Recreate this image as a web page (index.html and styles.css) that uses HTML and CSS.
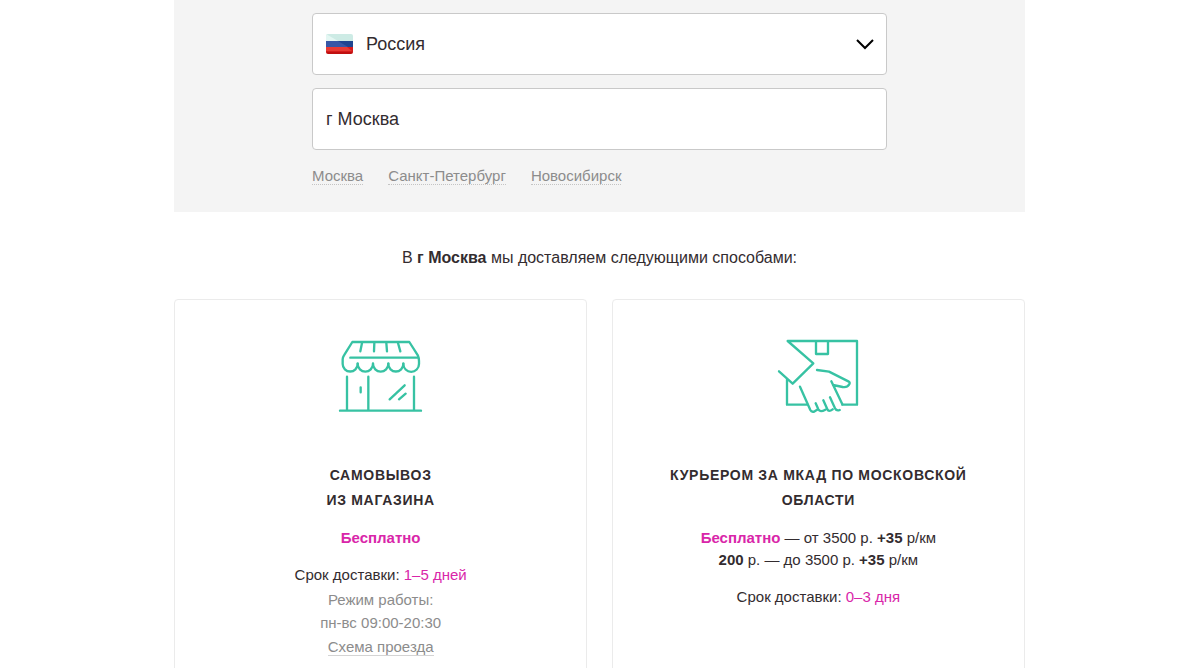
FILE: index.html
```html
<!DOCTYPE html>
<html lang="ru">
<head>
  <meta charset="UTF-8" />
  <meta name="viewport" content="width=device-width, initial-scale=1.0" />
  <title>Доставка</title>
  <link rel="stylesheet" href="styles.css">
</head>
<body>

  <main class="delivery">
    <section class="region">
      <form class="region-form">
        <div class="country">
          <svg class="flag" viewBox="0 0 27 20" aria-hidden="true">
            <clipPath id="flag-shape"><rect width="27" height="20" rx="2" /></clipPath>
            <g clip-path="url(#flag-shape)">
              <path fill="#cdebe5" d="M0 0h27v7H0z" />
              <path fill="#e4f7f3" d="M0 0l12 7H0z" />
              <path fill="#1f4590" d="M0 7h27v6H0z" />
              <path fill="#3757a6" d="M0 7h12l10 6H0z" />
              <path fill="#d51c1c" d="M0 13h27v5H0z" />
              <path fill="#e83a33" d="M0 13h21l5 4H0z" />
              <path fill="#c01010" d="M0 18h27v2H0z" />
            </g>
          </svg>
          <select class="field country-select" aria-label="Страна">
            <option>Россия</option>
          </select>
          <svg class="arrow" viewBox="0 0 18 11" aria-hidden="true">
            <path d="M1 1l8 8 8-8" />
          </svg>
        </div>
        <input class="field" type="text" value="г Москва" aria-label="Город">
        <div class="cities">
          <a href="#">Москва</a>
          <a href="#">Санкт-Петербург</a>
          <a href="#">Новосибирск</a>
        </div>
      </form>
    </section>

    <p class="intro">В <b>г Москва</b> мы доставляем следующими способами:</p>

    <section class="methods">
      <div class="method">
        <svg class="method-icon" viewBox="54 39 255 228" aria-hidden="true">
          <path d="M91 98H294M97 51H268L294 92Q297 98 297 108V117A22 22 0 0 1 250 117A22 22 0 0 1 205 117A22 22 0 0 1 159 117A22 22 0 0 1 113 117A22 22 0 0 1 68 117V103Q68 97 72 91Z" />
          <path d="M126 54L121 79M163 54L162 79M199 54L201 79M234 54L241 79" />
          <path d="M81 155V256M145 155V256M282 155V256M60 257H303M122 187V202M209 223L254 181M237 223L257 206" />
          <path d="M113 115V117M159 115V117M205 115V117M250 115V117" />
        </svg>
        <h2 class="method-title">Самовывоз<br>из магазина</h2>
        <p class="price"><b class="accent">Бесплатно</b></p>
        <p class="term">Срок доставки: <span class="accent">1–5 дней</span></p>
        <p class="schedule">Режим работы:<br>пн-вс 09:00-20:30</p>
        <a class="route" href="#">Схема проезда</a>
      </div>

      <div class="method">
        <svg class="method-icon" viewBox="48 39 255 228" aria-hidden="true">
          <path d="M81 161V239H143M247 239H291V48H83L160 115L98 176L57 139" />
          <path d="M168 50V87H204V50" />
          <path d="M171 135L207 140L265 169Q272 173 267 179Q262 188 248 186L219 180M214 169L247 238" />
          <path d="M120 185L151 255Q155 263 164 259L174 253M167 235L175 253Q180 263 196 254M190 226L202 253Q206 262 218 253M210 217L225 250Q230 259 239 255" />
        </svg>
        <h2 class="method-title">Курьером за МКАД по Московской области</h2>
        <p class="price"><b class="accent">Бесплатно</b> — от 3500 р. <b>+35</b> р/км<br><b>200</b> р. — до 3500 р. <b>+35</b> р/км</p>
        <p class="term">Срок доставки: <span class="accent">0–3 дня</span></p>
      </div>
    </section>
  </main>

</body>
</html>
```
FILE: styles.css
```css
* { box-sizing: border-box; margin: 0; padding: 0; }
body {
  background: #fff;
  color: #332c2f;
  font-family: "Liberation Sans", Arial, sans-serif;
  font-size: 15px;
  line-height: 22px;
  padding-left: 17px;
}
.delivery {
  width: 73%;
  max-width: 1100px;
  margin: 0 auto;
}
.region {
  background: #f4f4f4;
  padding: 13px 20px 27px;
}
.region-form {
  display: flex;
  flex-direction: column;
  gap: 13px;
  max-width: 575px;
  margin: 0 auto;
}
.country {
  position: relative;
}
.field {
  display: block;
  width: 100%;
  height: 62px;
  padding: 0 13px;
  background: #fff;
  border: 1px solid #c9c9c9;
  border-radius: 4px;
  color: #332c2f;
  font-family: inherit;
  font-size: 18px;
}
.country-select {
  appearance: none;
  padding-left: 53px;
  cursor: pointer;
}
.flag {
  position: absolute;
  left: 14px;
  top: 21px;
  width: 27px;
  height: 20px;
}
.arrow {
  position: absolute;
  right: 13px;
  top: 26px;
  width: 18px;
  height: 11px;
  fill: none;
  stroke: #000;
  stroke-width: 2;
  pointer-events: none;
}
.cities {
  display: flex;
  flex-wrap: wrap;
  gap: 25px;
  padding-top: 5px;
}
.cities a {
  color: #8c8c8c;
  line-height: 16px;
  text-decoration: none;
  border-bottom: 1px dotted #c4c4c4;
}
.intro {
  padding: 35px 0 30px;
  font-size: 16px;
  text-align: center;
}
.methods {
  display: grid;
  grid-template-columns: 1fr 1fr;
  gap: 25px;
}
.method {
  padding: 38px 40px 40px;
  border: 1px solid #ebebeb;
  border-radius: 4px;
  text-align: center;
}
.method-icon {
  display: block;
  width: 85px;
  height: 76px;
  margin: 0 auto 49px;
  fill: none;
  stroke: #37c2a3;
  stroke-width: 7;
  stroke-linecap: round;
  stroke-linejoin: round;
}
.method-title {
  margin-bottom: 14px;
  font-size: 14px;
  line-height: 25px;
  letter-spacing: 0.05em;
  text-transform: uppercase;
}
.price {
  margin-bottom: 15px;
}
.accent {
  color: #d926a9;
}
.schedule {
  margin-top: 2px;
  color: #8c8c8c;
  line-height: 23px;
}
.route {
  display: inline-block;
  margin-top: 5px;
  color: #8c8c8c;
  line-height: 16px;
  text-decoration: none;
  border-bottom: 1px solid #d4d4d4;
}
```
